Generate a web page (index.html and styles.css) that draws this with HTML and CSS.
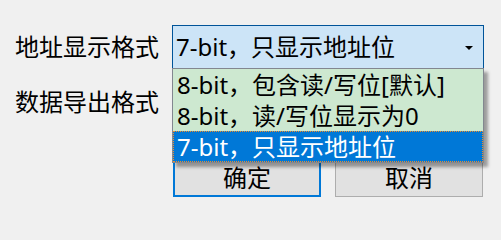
FILE: index.html
```html
<!DOCTYPE html>
<html lang="zh-CN">
<head>
<meta charset="utf-8">
<title>地址显示格式</title>
<link rel="stylesheet" href="styles.css">
</head>
<body>
<div class="dialog">
  <div class="form">
    <div class="label">地址显示格式</div>
    <div class="combo-wrap">
      <div class="combo combo-open">
        <span class="combo-text">7-bit，只显示地址位</span>
        <span class="arrow"></span>
      </div>
      <ul class="droplist">
        <li class="item">8-bit，包含读/写位[默认]</li>
        <li class="item">8-bit，读/写位显示为0</li>
        <li class="item selected">7-bit，只显示地址位</li>
      </ul>
    </div>
    <div class="label">数据导出格式</div>
    <div class="combo">
      <span class="combo-text"></span>
      <span class="arrow"></span>
    </div>
  </div>
  <div class="buttons">
    <button class="btn btn-default">确定</button>
    <button class="btn">取消</button>
  </div>
</div>
</body>
</html>
```
FILE: styles.css
```css
html, body {
  margin: 0;
  padding: 0;
  background: #f0f0f0;
  width: 501px;
  height: 209px;
  overflow: hidden;
}
body {
  font-family: "Noto Sans", "Noto Sans CJK SC", sans-serif;
  font-size: 24px;
  color: #000;
}
.dialog {
  padding: 25px 0 0 15px;
}
.form {
  display: grid;
  grid-template-columns: 157px 312px;
  grid-auto-rows: 44px;
  row-gap: 11px;
  align-items: center;
}
.label {
  line-height: 30px;
  white-space: nowrap;
}
.combo-wrap {
  position: relative;
  height: 44px;
}
.combo {
  box-sizing: border-box;
  height: 44px;
  border: 1px solid #adadad;
  background: #e1e1e1;
  display: flex;
  align-items: center;
  padding: 0 10px 0 3px;
}
.combo-open {
  background: #cce4f7;
  border-color: #005499;
}
.combo-text {
  flex: 1;
  line-height: 30px;
  white-space: nowrap;
}
.arrow {
  width: 0;
  height: 0;
  border-left: 4px solid transparent;
  border-right: 4px solid transparent;
  border-top: 4px solid #000;
  margin-top: 2px;
}
.droplist {
  position: absolute;
  left: 0;
  top: 43px;
  z-index: 2;
  box-sizing: border-box;
  width: 312px;
  margin: 0;
  padding: 0;
  list-style: none;
  background: #cde8d0;
  border: 1px solid #828790;
  box-shadow: 4px 4px 3px rgba(0, 0, 0, 0.35);
}
.item {
  box-sizing: border-box;
  height: 31px;
  line-height: 29px;
  padding: 0 3px;
  border: 1px solid transparent;
  white-space: nowrap;
}
.item.selected {
  background: #0078d7;
  color: #fff;
  border: 1px dotted #f08c28;
}
.buttons {
  display: flex;
  gap: 14px;
  margin-top: 34px;
  padding-left: 158px;
}
.btn {
  box-sizing: border-box;
  width: 148px;
  height: 39px;
  margin: 0;
  padding: 0;
  font: inherit;
  line-height: 30px;
  color: #000;
  background: #e1e1e1;
  border: 1px solid #adadad;
}
.btn-default {
  border: 2px solid #0078d7;
}
```
